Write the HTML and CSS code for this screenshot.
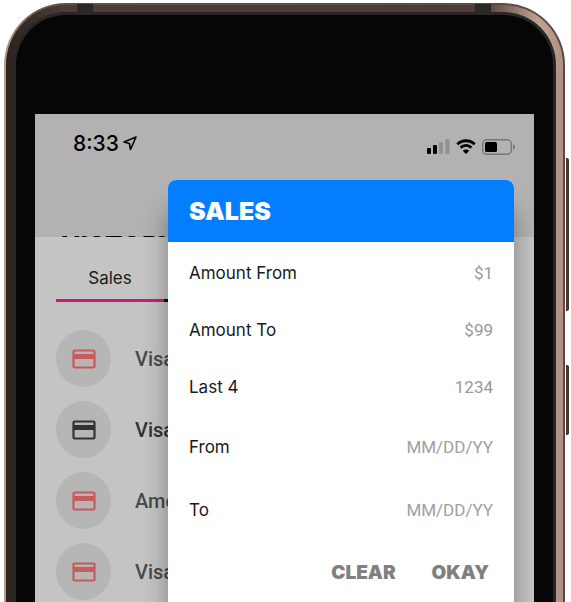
FILE: index.html
```
<!DOCTYPE html>
<html lang="en">
  <head>
    <meta charset="UTF-8" />
    <meta name="viewport" content="width=device-width, initial-scale=1.0" />
    <title>Sales filter</title>
    <link rel="stylesheet" href="styles.css" />
  </head>
  <body>
    <svg width="0" height="0" class="sprite" aria-hidden="true">
      <symbol id="card" viewBox="0 0 24 20">
        <rect x="1.5" y="1.5" width="21" height="17" rx="1" fill="none" stroke="currentColor" stroke-width="2.2" />
        <path d="M1 5h22v5H1z" fill="currentColor" />
      </symbol>
    </svg>
    <div class="phone">
      <div class="metal">
        <div class="rim">
          <div class="face">
            <div class="screen">
              <header class="header">
                <div class="status">
                  <span class="time">8:33</span>
                  <svg class="arrow" width="14" height="15" viewBox="0 0 14 15">
                    <path d="M13 1 1 6l5.400 1.400L7.500 13.500z" fill="none" stroke="#000" stroke-width="1.600" stroke-linejoin="round" />
                  </svg>
                  <div class="signals">
                    <svg width="23" height="15" viewBox="0 0 23 15">
                      <rect x="0" y="9" width="4" height="6" rx="1" />
                      <rect x="6" y="6" width="4" height="9" rx="1" />
                      <rect x="12" y="3" width="4" height="12" rx="1" fill="#909090" />
                      <rect x="18.500" y="0" width="4" height="15" rx="1" fill="#909090" />
                    </svg>
                    <svg width="20" height="15" viewBox="0 0 20 15">
                      <path d="M1.300 5.200a12.500 12.500 0 0 1 17.400 0M4.600 8.600a7.700 7.700 0 0 1 10.800 0" fill="none" stroke="#000" stroke-width="2.900" />
                      <path d="M10 15 6.800 11.800a4.600 4.600 0 0 1 6.400 0z" />
                    </svg>
                    <svg width="33" height="16" viewBox="0 0 33 16">
                      <rect x="0.700" y="0.700" width="28.600" height="14.600" rx="4" fill="none" stroke="#777" stroke-width="1.400" />
                      <rect x="3" y="3" width="12" height="10" rx="1.500" />
                      <path d="M31 5v6q2-1 2-3t-2-3z" fill="#777" />
                    </svg>
                  </div>
                </div>
                <h1 class="page-title">HISTORY</h1>
              </header>
              <nav class="tabs">
                <button class="tab active">Sales</button>
                <span class="tab-rest"></span>
              </nav>
              <ul class="list">
                <li class="item">
                  <span class="icon red"><svg width="24" height="20"><use href="#card" /></svg></span>Visa
                </li>
                <li class="item strong">
                  <span class="icon"><svg width="24" height="20"><use href="#card" /></svg></span>Visa
                </li>
                <li class="item">
                  <span class="icon red"><svg width="24" height="20"><use href="#card" /></svg></span>Ame
                </li>
                <li class="item">
                  <span class="icon red"><svg width="24" height="20"><use href="#card" /></svg></span>Visa
                </li>
              </ul>
              <form class="modal">
                <h2 class="modal-title">SALES</h2>
                <div class="fields">
                  <div class="field">
                    <label for="amountFrom">Amount From</label>
                    <input id="amountFrom" type="text" placeholder="$1" autocomplete="off" />
                  </div>
                  <div class="field">
                    <label for="amountTo">Amount To</label>
                    <input id="amountTo" type="text" placeholder="$99" autocomplete="off" />
                  </div>
                  <div class="field">
                    <label for="last4">Last 4</label>
                    <input id="last4" type="text" placeholder="1234" autocomplete="off" />
                  </div>
                  <div class="field date">
                    <label for="dateFrom">From</label>
                    <input id="dateFrom" type="text" placeholder="MM/DD/YY" autocomplete="off" />
                  </div>
                  <div class="field date">
                    <label for="dateTo">To</label>
                    <input id="dateTo" type="text" placeholder="MM/DD/YY" autocomplete="off" />
                  </div>
                </div>
                <div class="actions">
                  <button type="reset" class="btn">CLEAR</button>
                  <button type="button" class="btn">OKAY</button>
                </div>
              </form>
            </div>
          </div>
        </div>
      </div>
      <span class="band band-left"></span>
      <span class="band band-right"></span>
      <span class="key volume"></span>
      <span class="key power"></span>
    </div>
  </body>
</html>
```
FILE: styles.css
```
* {
  box-sizing: border-box;
}
body {
  margin: 0;
  height: 100vh;
  overflow: hidden;
  background-color: #fff;
  font-family: Inter, "Liberation Sans", sans-serif;
}
.sprite {
  position: absolute;
}

/* phone body */
.phone {
  position: relative;
  height: 100vh;
  padding: 3px 6px 0 4px;
}
.metal {
  height: 100%;
  padding: 2px 2px 0;
  border-radius: 62px 62px 0 0;
  background: linear-gradient(to right, #b99d92 0, #65524c 30px, #5b4944 100%);
}
.rim {
  height: 100%;
  padding: 7px 7px 0;
  border-radius: 60px 60px 0 0;
  background: linear-gradient(
    to right,
    #2c231f 0,
    #4d3c38 60px,
    #4d3c38 calc(100% - 80px),
    #c0a294 calc(100% - 25px),
    #b09083 100%
  );
}
.face {
  height: 100%;
  border: 3px solid #292625;
  border-bottom: 0;
  border-radius: 53px 53px 0 0;
  background-color: #060606;
  padding: 99px 19px 0;
}
.band {
  position: absolute;
  top: 4px;
  width: 16px;
  height: 10px;
  background-color: #292827;
}
.band-left {
  left: 77px;
}
.band-right {
  right: 80px;
}
.key {
  position: absolute;
  right: 2px;
  width: 3px;
  border-radius: 0 2px 2px 0;
  background-color: #4a342e;
}
.volume {
  top: 158px;
  height: 153px;
}
.power {
  top: 365px;
  height: 70px;
}

/* app screen */
.screen {
  position: relative;
  height: 100%;
  overflow: hidden;
  background-color: #c4c4c4;
}
.header {
  height: 123px;
  overflow: hidden;
  background-color: #b2b2b2;
}
.status {
  display: flex;
  align-items: center;
  height: 58px;
  padding: 0 19px 0 38px;
}
.time {
  font-size: 21px;
  font-weight: 500;
}
.arrow {
  margin-left: 4px;
}
.signals {
  display: flex;
  align-items: center;
  gap: 6px;
  margin-left: auto;
  padding-top: 7px;
}
.page-title {
  margin: 58px 0 0 26px;
  font-size: 26px;
  line-height: 32px;
  font-weight: 800;
}
.tabs {
  display: flex;
  height: 65px;
  padding-left: 21px;
}
.tab {
  width: 108px;
  padding: 19px 0 0;
  border: 0;
  border-bottom: 3px solid #c81e78;
  background: none;
  font-family: inherit;
  font-size: 17px;
  color: #1a1a1a;
}
.tab-rest {
  width: 108px;
  border-bottom: 3px solid #111;
}
.list {
  display: flex;
  flex-direction: column;
  gap: 14px;
  margin: 0;
  padding: 28px 0 0 21px;
  list-style: none;
}
.item {
  display: flex;
  align-items: center;
  gap: 24px;
  height: 57px;
  font-family: Roboto, sans-serif;
  font-size: 20px;
  font-weight: 500;
  color: #4a4a4a;
}
.strong {
  color: #333;
}
.icon {
  display: flex;
  align-items: center;
  justify-content: center;
  width: 55px;
  height: 57px;
  border-radius: 50%;
  background-color: #b6b6b6;
  color: #333;
}
.red {
  color: #c75a5a;
}

/* filter dialog */
.modal {
  position: absolute;
  top: 66px;
  left: 133px;
  right: 20px;
  padding-bottom: 40px;
  border-radius: 8px;
  background-color: #fff;
  box-shadow: 0 30px 24px rgba(0, 0, 0, 0.35);
}
.modal-title {
  margin: 0;
  padding: 0 21px;
  border-radius: 8px 8px 0 0;
  background-color: #047eff;
  color: #fff;
  font-size: 25px;
  line-height: 62px;
  font-weight: 900;
}
.fields {
  padding: 2px 21px 0;
}
.field {
  display: flex;
  align-items: center;
  justify-content: space-between;
  height: 57px;
  font-size: 17px;
  color: #1a1a1a;
}
.date {
  height: 63px;
}
.field input {
  width: 130px;
  padding: 0;
  border: 0;
  outline: none;
  background: none;
  font-family: Roboto, sans-serif;
  font-size: 17px;
  text-align: right;
}
.field input::placeholder {
  color: #999;
}
.date input::placeholder {
  color: #a0a0a0;
}
.actions {
  display: flex;
  align-items: center;
  justify-content: flex-end;
  gap: 36px;
  height: 62px;
  padding-right: 25px;
}
.btn {
  padding: 0;
  border: 0;
  background: none;
  font-family: inherit;
  font-size: 19px;
  font-weight: 900;
  color: #808080;
}
```
